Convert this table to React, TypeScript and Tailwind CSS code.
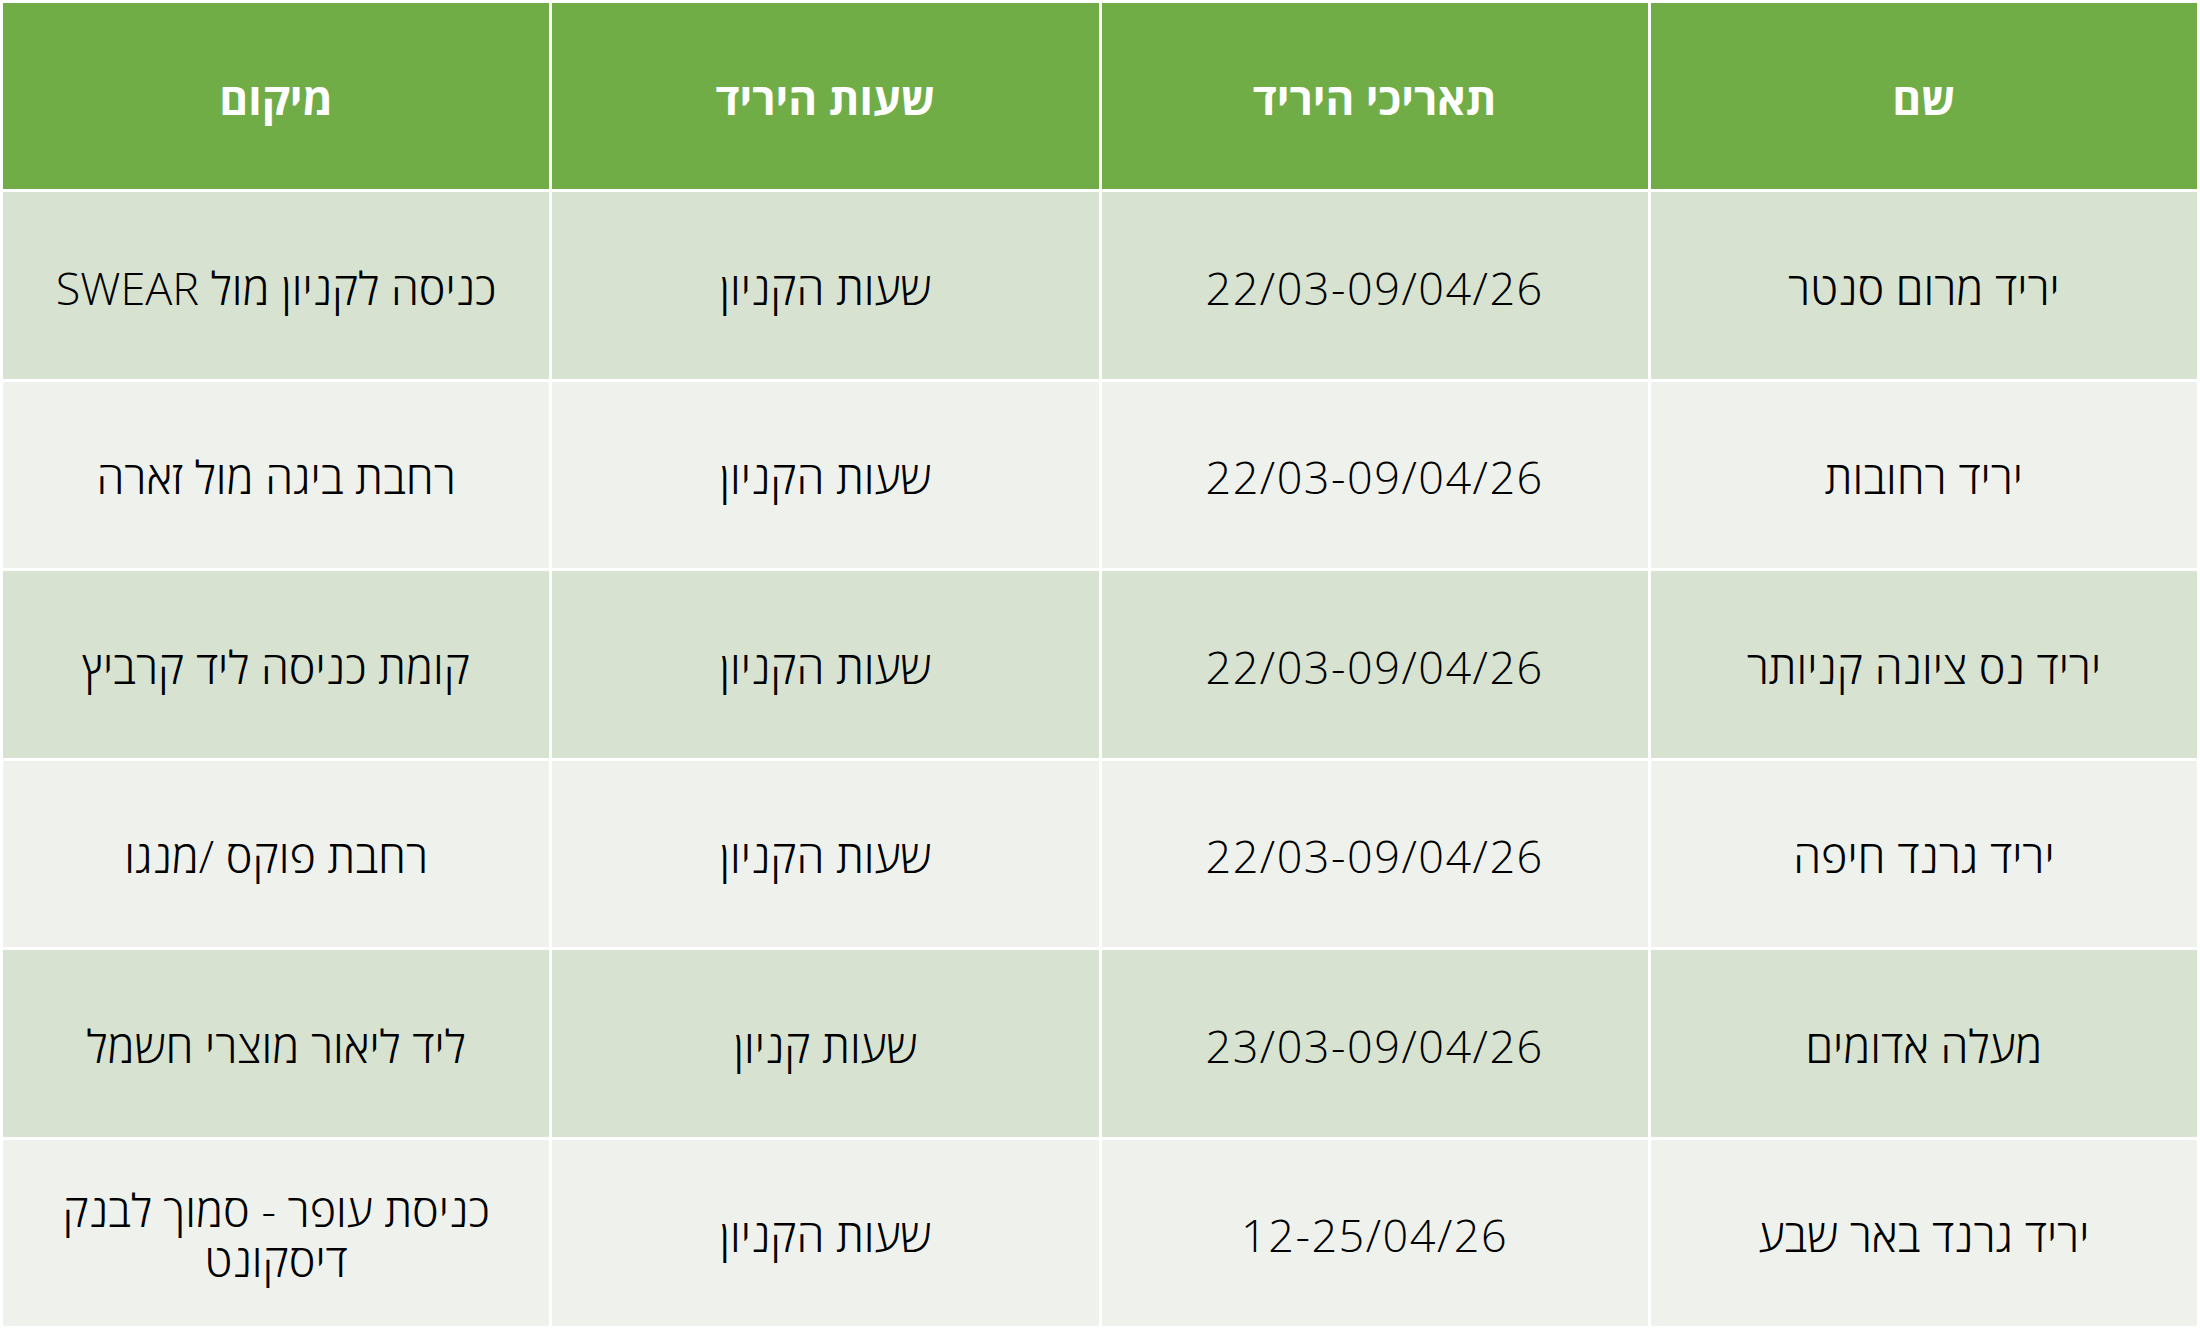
const headers = ['שם', 'תאריכי היריד', 'שעות היריד', 'מיקום'];

const rows: string[][] = [
  ['יריד מרום סנטר', '22/03-09/04/26', 'שעות הקניון', 'כניסה לקניון מול SWEAR'],
  ['יריד רחובות', '22/03-09/04/26', 'שעות הקניון', 'רחבת ביגה מול זארה'],
  ['יריד נס ציונה קניותר', '22/03-09/04/26', 'שעות הקניון', 'קומת כניסה ליד קרביץ'],
  ['יריד גרנד חיפה', '22/03-09/04/26', 'שעות הקניון', 'רחבת פוקס /מנגו'],
  ['מעלה אדומים', '23/03-09/04/26', 'שעות קניון', 'ליד ליאור מוצרי חשמל'],
  ['יריד גרנד באר שבע', '12-25/04/26', 'שעות הקניון', 'כניסת עופר - סמוך לבנק דיסקונט'],
];

export default function App() {
  return (
    <div
      dir="rtl"
      className="grid h-[1329px] w-[2200px] grid-cols-4 grid-rows-7 gap-[3px] bg-white p-[3px] font-['Open_Sans',sans-serif]"
    >
      {headers.map((h) => (
        <div
          key={h}
          className="flex items-center justify-center pt-1 bg-[#70ad47] text-[44px] font-bold text-white"
        >
          {h}
        </div>
      ))}
      {rows.map((row, i) =>
        row.map((cell, j) => (
          <div
            key={`${i}-${j}`}
            className={`flex items-center justify-center px-12 pt-1 text-center text-[45px] font-[350] leading-[1.1] text-black ${
              j === 1 ? 'tracking-[1.5px]' : ''
            } ${i % 2 === 0 ? 'bg-[#d7e3d0]' : 'bg-[#eff2ec]'}`}
          >
            {cell}
          </div>
        ))
      )}
    </div>
  );
}
